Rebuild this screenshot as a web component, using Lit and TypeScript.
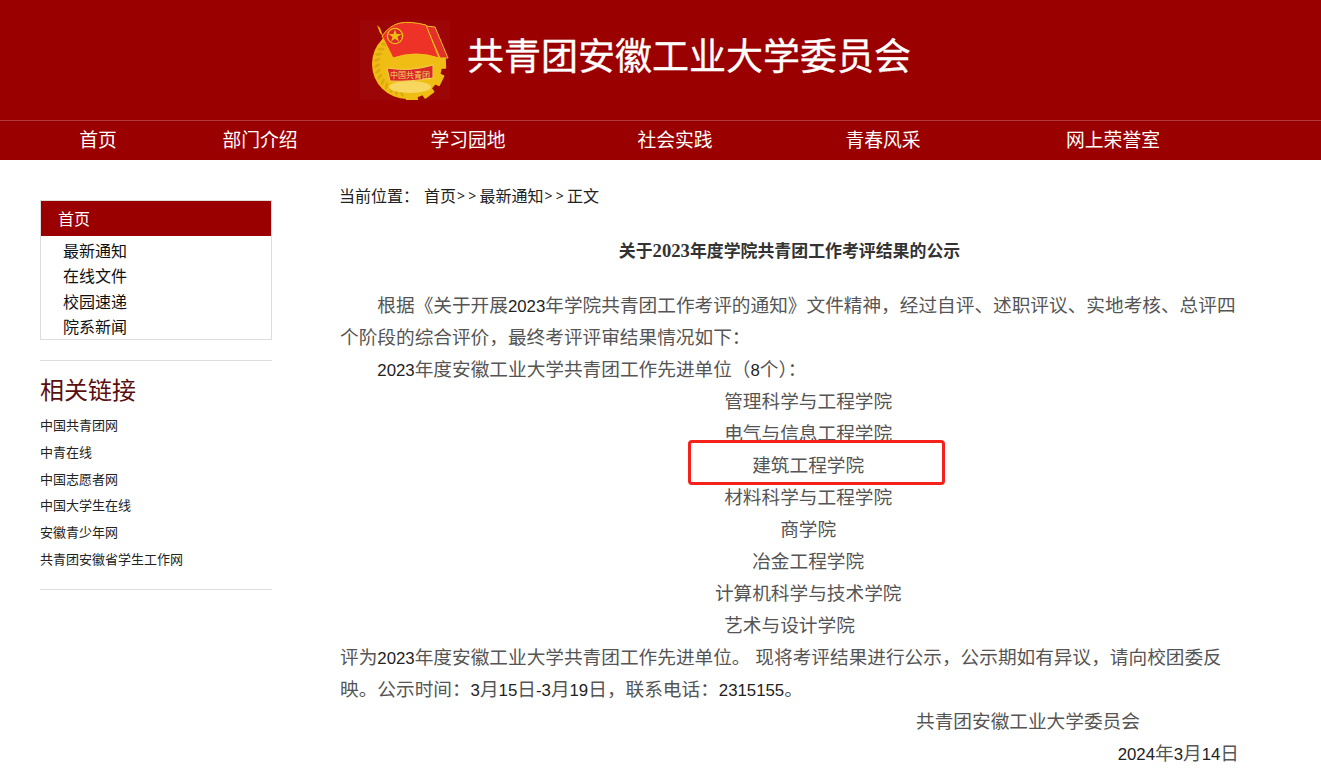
import { LitElement, html, css, svg } from "lit";
import { customElement } from "lit/decorators.js";

const NAV: [string, number][] = [["首页", 196], ["部门介绍", 128], ["学习园地", 288], ["社会实践", 126], ["青春风采", 290], ["网上荣誉室", 170]];
const SIDE = ["最新通知", "在线文件", "校园速递", "院系新闻"];
const LINKS = ["中国共青团网", "中青在线", "中国志愿者网", "中国大学生在线", "安徽青少年网", "共青团安徽省学生工作网"];
const UNITS = ["管理科学与工程学院", "电气与信息工程学院", "建筑工程学院", "材料科学与工程学院", "商学院", "冶金工程学院", "计算机科学与技术学院"];

const num = (t: string) => t.split(/([\d-]+)/).map((s, i) => (i % 2 ? html`<span class="d">${s}</span>` : s));

const CX = 47;
const CY = 44;
const leaves = Array.from({ length: 12 }, (_, i) => {
  const deg = 100 + i * 11;
  const a = (deg * Math.PI) / 180;
  const x = CX + 30 * Math.cos(a);
  const y = CY + 30 * Math.sin(a);
  return svg`<ellipse cx=${x} cy=${y} rx="1.500" ry="3.400" fill="#dda90f" transform="rotate(${deg + 60} ${x} ${y})"></ellipse>`;
});
const teeth = [-2, 26, 54, 82].map(
  (deg) => svg`<rect x=${CX + 30} y=${CY - 6} width="9" height="12" rx="1" fill="#f0bd14" transform="rotate(${deg} ${CX} ${CY})"></rect>`
);

const logo = html`<svg class="logo" viewBox="0 0 90 80" width="90" height="80" aria-hidden="true">
  <rect width="90" height="80" fill="#9d0606"></rect>
  ${teeth}
  <circle cx=${CX} cy=${CY} r="35" fill="#f0bd14"></circle>
  ${leaves}
  <ellipse cx="50" cy="67" rx="21" ry="6" fill="#f7d760"></ellipse>
  <path d="M27 48Q50 52 73 45L73 58Q50 62 30 61Z" fill="#d8282a" stroke="#f7d34f" stroke-width="1"></path>
  <text class="badge" x="50" y="58" text-anchor="middle">中国共青团</text>
  <path d="M17 5l3 3 3 8-3-3z" fill="#f0bd14"></path>
  <path d="M66 6l9 1 13 31-8 0z" fill="#e2302a" stroke="#f4c21a" stroke-width="1"></path>
  <path d="M22 16Q30 5 40 3T66 5L79 38Q56 30 33 38Z" fill="#ee3228" stroke="#f4c21a" stroke-width="1"></path>
  <circle cx="35" cy="16" r="7.600" fill="#d8282a" stroke="#f0bd14" stroke-width="1.400"></circle>
  <path d="M35 9.500l1.600 4.500h4.800l-3.900 2.900 1.500 4.700-4-2.900-4 2.900 1.500-4.700-3.900-2.900h4.800z" fill="#f0bd14"></path>
</svg>`;

@customElement("app-root")
export class AppRoot extends LitElement {
  static styles = css`
    :host {
      display: block;
      height: 781px;
      overflow: hidden;
      background: #fff;
      font-family: "Noto Sans", "Noto Sans CJK SC", sans-serif;
      position: relative;
    }
    .brand {
      height: 120px;
      background: #9b0000;
      display: flex;
      align-items: flex-start;
      padding: 20px 0 0 360px;
      box-sizing: border-box;
      gap: 18px;
    }
    .logo { display: block; flex: none; }
    .badge { font-size: 8px; fill: #f7d760; font-family: "Noto Sans CJK SC", sans-serif; }
    .brand h1 {
      margin: 11px 0 0 -1px;
      font-size: 37px;
      line-height: 50px;
      font-weight: 400;
      color: #fff;
      -webkit-text-stroke: 0.3px #fff;
      white-space: nowrap;
    }
    nav {
      height: 40px;
      box-sizing: border-box;
      background: #9b0000;
      border-top: 1px solid #b23a3a;
      display: flex;
    }
    nav a {
      flex: none;
      text-align: center;
      font-size: 18.800px;
      line-height: 38px;
      color: #fff;
    }
    .page {
      display: flex;
      padding: 20px 0 0 40px;
    }
    aside {
      flex: none;
      width: 232px;
      margin-right: 68px;
      padding-top: 20px;
    }
    .box {
      border: 1px solid #ddd;
      height: 140px;
      box-sizing: border-box;
    }
    .box .head {
      height: 35px;
      background: #9b0000;
      color: #fff;
      font-size: 16px;
      line-height: 37px;
      padding-left: 17px;
      margin-bottom: 3px;
    }
    .box a {
      display: block;
      font-size: 16px;
      line-height: 25.300px;
      padding-left: 22px;
      color: #111;
    }
    .side-title {
      border-top: 1px solid #ddd;
      margin-top: 20px;
      padding-top: 13px;
      font-size: 24px;
      line-height: 32px;
      color: #5a1010;
    }
    .links {
      list-style: none;
      margin: 6px 0 0;
      padding: 0 0 16px;
      border-bottom: 1px solid #ddd;
    }
    .links li {
      font-size: 13px;
      line-height: 26.800px;
      color: #222;
    }
    main {
      flex: none;
      width: 899px;
      color: #555;
      font-size: 18.670px;
      line-height: 32px;
    }
    .d {
      font-family: "Liberation Sans", sans-serif;
      font-size: 0.9em;
      line-height: 1;
      color: #222;
    }
    .crumb {
      font-size: 16px;
      line-height: 32px;
      color: #222;
      margin-left: -1px;
      display: flex;
    }
    .crumb .gt {
      font-size: 14px;
      letter-spacing: 3.200px;
      padding-left: 1px;
      white-space: pre;
    }
    .crumb .at { margin-right: 5px; }
    h2 {
      margin: 23px 0 22px;
      font-size: 16.900px;
      line-height: 32px;
      font-weight: 700;
      text-align: center;
      color: #333;
    }
    h2 .d {
      font-family: "Liberation Serif", serif;
      font-size: 18.670px;
      color: #333;
    }
    p { margin: 0; text-indent: 2em; }
    p.flush { text-indent: 0; }
    p.unit { text-align: center; }
    p.plain { text-align: center; text-indent: 0; }
    p.sign { text-indent: 0; padding-left: 576px; }
    p.date { text-indent: 0; text-align: right; }
    .mark {
      position: absolute;
      left: 688px;
      top: 440px;
      width: 257px;
      height: 45px;
      box-sizing: border-box;
      border: 3px solid #f5221b;
      border-radius: 4px;
    }
  `;

  render() {
    return html`
      <header class="brand">${logo}<h1>共青团安徽工业大学委员会</h1></header>
      <nav>${NAV.map(([t, w]) => html`<a style="width:${w}px">${t}</a>`)}</nav>
      <div class="page">
        <aside>
          <div class="box">
            <div class="head">首页</div>
            ${SIDE.map((t) => html`<a>${t}</a>`)}
          </div>
          <div class="side-title">相关链接</div>
          <ul class="links">${LINKS.map((t) => html`<li>${t}</li>`)}</ul>
        </aside>
        <main>
          <div class="crumb"><span class="at">当前位置：</span><span>首页</span><span class="gt">&gt;&gt;</span><span>最新通知</span><span class="gt">&gt;&gt;</span><span>正文</span></div>
          <h2>${num("关于2023年度学院共青团工作考评结果的公示")}</h2>
          <p>${num("根据《关于开展2023年学院共青团工作考评的通知》文件精神，经过自评、述职评议、实地考核、总评四个阶段的综合评价，最终考评评审结果情况如下：")}</p>
          <p>${num("2023年度安徽工业大学共青团工作先进单位（8个）：")}</p>
          ${UNITS.map((t) => html`<p class="unit">${t}</p>`)}
          <p class="plain">艺术与设计学院</p>
          <p class="flush">${num("评为2023年度安徽工业大学共青团工作先进单位。 现将考评结果进行公示，公示期如有异议，请向校团委反映。公示时间：3月15日-3月19日，联系电话：2315155。")}</p>
          <p class="sign">共青团安徽工业大学委员会</p>
          <p class="date">${num("2024年3月14日")}</p>
        </main>
      </div>
      <div class="mark"></div>
    `;
  }
}
